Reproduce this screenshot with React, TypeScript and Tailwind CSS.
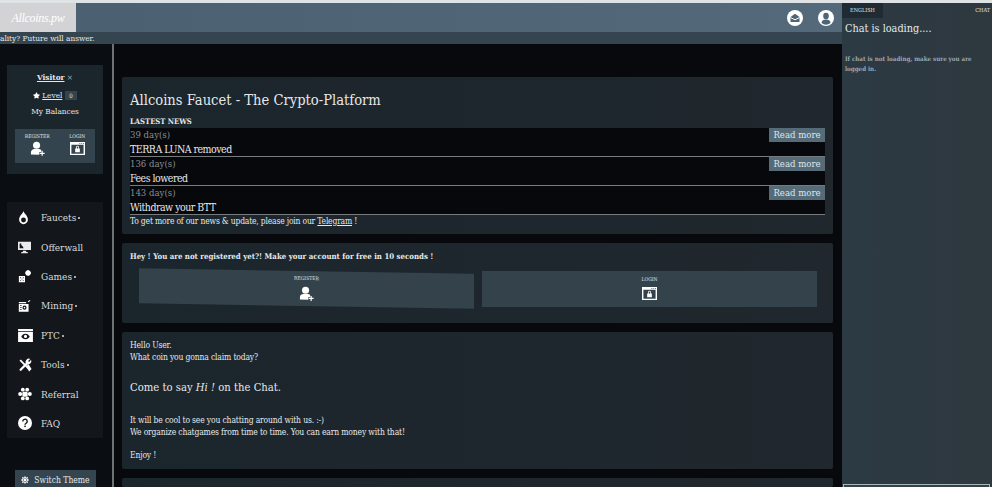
import { FaStar, FaSun } from "react-icons/fa";

const serif = "font-['DejaVu_Serif_Condensed','DejaVu_Serif',serif]";

function DropIcon() {
  return (
    <svg viewBox="0 0 12 16" className="w-[11px] h-[14px]" fill="white">
      <path fillRule="evenodd" d="M6 0c.3 1.500 1 2.200 2 3.500C9.800 5.500 11 7.500 11 10a5 5 0 0 1-10 0c0-2.500 1.200-4.500 3-6.500C5 2.200 5.700 1.500 6 0zm0 7.500a2.800 2.800 0 1 0 0 5.600 2.800 2.800 0 0 0 0-5.600z" />
    </svg>
  );
}

function MonitorIcon() {
  return (
    <svg viewBox="0 0 16 16" className="w-[13px] h-[13px]" fill="#e8eaeb">
      <path fillRule="evenodd" d="M0 1h16v10H0zM2 3v6h5L5.500 6 4 5V3zM6 12h4v1.500h2V15H4v-1.500h2z" />
    </svg>
  );
}

function DiceIcon() {
  return (
    <svg viewBox="0 0 16 16" className="w-[14px] h-[14px]" fill="white">
      <path fillRule="evenodd" d="M1 8h7v7H1zM2.500 9.500v1h1v-1zM5.500 9.500v1h1v-1zM4 11v1h1v-1zM2.500 12.500v1h1v-1zM5.500 12.500v1h1v-1z" />
      <path d="M11.500 1l3.500 3.500-3.500 3.500L8 4.500z" />
      <circle cx="11.500" cy="4.500" r="3" />
    </svg>
  );
}

function MiningIcon() {
  return (
    <svg viewBox="0 0 16 16" className="w-[13px] h-[14px]" fill="white">
      <path fillRule="evenodd" d="M1 3h9v1.500H1zM1 5.500h12V15H1zM8 7.500a2.500 2.500 0 1 0 0 5 2.500 2.500 0 0 0 0-5zM8 9a1 1 0 1 1 0 2 1 1 0 0 1 0-2zM2.500 7v1h2V7zM2.500 9.500v1h2v-1zM2.500 12v1h2v-1zM12 2.500l2.500-2 .8 1-2.500 2z" />
    </svg>
  );
}

function EyeWindow() {
  return (
    <svg viewBox="0 0 16 14" className="w-[15px] h-[13px]" fill="white">
      <path fillRule="evenodd" d="M0 0h16v14H0zM0 2.500v.8h16v-.8zM8 5c-2.500 0-4 1.800-4.500 3C4 9.200 5.500 11 8 11s4-1.800 4.500-3C12 6.800 10.500 5 8 5zm0 1.300a1.700 1.700 0 1 1 0 3.400 1.700 1.700 0 0 1 0-3.400z" />
    </svg>
  );
}

function ToolsIcon() {
  return (
    <svg viewBox="0 0 16 16" className="w-[14px] h-[14px]" fill="white">
      <path d="M3 13.500L11 5.500" stroke="white" strokeWidth="2.600" strokeLinecap="round" />
      <path d="M2.500 2.500L13.500 13.500" stroke="white" strokeWidth="2.200" />
      <path d="M9 6.500a4 4 0 0 1 5-5.500l-2.500 2.300 1.200 1.200L15 2a4 4 0 0 1-5.500 5z" />
      <path d="M9.500 9.500l2.500-2.500 3.500 5.500-2.800 2.800z" />
    </svg>
  );
}

function GroupIcon() {
  return (
    <svg viewBox="0 0 16 16" className="w-[14px] h-[14px]" fill="white">
      <circle cx="5.500" cy="3" r="2.200" />
      <circle cx="10.500" cy="3" r="2.200" />
      <circle cx="2.500" cy="8" r="2.300" />
      <circle cx="13.500" cy="8" r="2.300" />
      <rect x="5" y="5.500" width="6" height="5.500" rx="1.500" />
      <circle cx="5.500" cy="13" r="2.200" />
      <circle cx="10.500" cy="13" r="2.200" />
    </svg>
  );
}

function QuestionIcon() {
  return (
    <svg viewBox="0 0 16 16" className="w-[14px] h-[14px]">
      <circle cx="8" cy="8" r="8" fill="white" />
      <path d="M5.500 6.200a2.500 2.500 0 1 1 3.800 2.100c-.8.500-1.300.9-1.300 1.700" fill="none" stroke="#13171b" strokeWidth="1.600" />
      <rect x="7.200" y="11" width="1.700" height="1.700" fill="#13171b" />
    </svg>
  );
}

function UserPlus({ className }: { className: string }) {
  return (
    <svg viewBox="0 0 16 16" className={className} fill="white">
      <circle cx="7" cy="4.500" r="3.800" />
      <path d="M1 14.500v-2.500c0-2 2-3.400 3.500-3.400h5c1 0 1.800.4 2.400 1v2h-2v3z" />
      <path d="M12.300 10.500h1.300v2h2v1.300h-2v2h-1.300v-2h-2v-1.300h2z" />
    </svg>
  );
}

function WindowLock({ className }: { className: string }) {
  return (
    <svg viewBox="0 0 16 16" className={className} fill="white">
      <path fillRule="evenodd" d="M0 1h16v14H0zM1.500 4v9.500h13V4zM10 2v1h1V2zM12 2v1h1V2zM14 2v1h1V2zM5.500 8h5v4h-5zM6.500 8V6.500a1.500 1.500 0 0 1 3 0V8H8.700V6.500a.7.7 0 0 0-1.400 0V8z" />
    </svg>
  );
}

function MailBadge() {
  return (
    <svg viewBox="0 0 16 16" className="w-[16px] h-[16px]">
      <circle cx="8" cy="8" r="8" fill="white" />
      <path d="M3.500 7L8 3.800 12.500 7v5h-9z" fill="#4f6474" />
      <path d="M3.500 7.500L8 9.800l4.500-2.300" fill="none" stroke="white" strokeWidth="1" />
    </svg>
  );
}

function UserBadge() {
  return (
    <svg viewBox="0 0 16 16" className="w-[16px] h-[16px]">
      <circle cx="8" cy="8" r="8" fill="white" />
      <ellipse cx="8" cy="6" rx="2.800" ry="3.300" fill="#4f6474" />
      <path d="M3.500 13c0-2.500 2-3.600 4.500-3.600s4.500 1.100 4.500 3.600a7 7 0 0 1-9 0z" fill="#4f6474" />
    </svg>
  );
}

const menu = [
  { icon: <DropIcon />, label: "Faucets", more: true },
  { icon: <MonitorIcon />, label: "Offerwall", more: false },
  { icon: <DiceIcon />, label: "Games", more: true },
  { icon: <MiningIcon />, label: "Mining", more: true },
  { icon: <EyeWindow />, label: "PTC", more: true },
  { icon: <ToolsIcon />, label: "Tools", more: true },
  { icon: <GroupIcon />, label: "Referral", more: false },
  { icon: <QuestionIcon />, label: "FAQ", more: false },
];

const news = [
  { age: "39 day(s)", title: "TERRA LUNA removed" },
  { age: "136 day(s)", title: "Fees lowered" },
  { age: "143 day(s)", title: "Withdraw your BTT" },
];

function Card({ className, children }: { className: string; children: React.ReactNode }) {
  return <div className={`bg-gradient-to-r from-[#1b252c] to-[#20282e] rounded-[2px] px-2 ${className}`}>{children}</div>;
}

export default function App() {
  return (
    <div className={`${serif} w-[992px] h-[487px] overflow-hidden flex flex-col bg-[#08090c] text-[#e6e9eb] border-t-[3px] border-[#dfe3e6]`}>
      <div className="flex flex-1 min-h-0">
        <div className="w-[842px] flex flex-col min-h-0">
          {/* Header */}
          <div className="h-[29px] flex items-center bg-gradient-to-r from-[#4a6070] to-[#54697a] shrink-0">
            <div className="w-[76px] h-full bg-[#d3d3d5] flex items-center justify-center">
              <span className="text-white italic font-['Liberation_Serif',serif] text-[12px] tracking-tight">Allcoins.pw</span>
            </div>
            <div className="flex-1" />
            <div className="flex items-center gap-[15px] pr-[8px]">
              <MailBadge />
              <UserBadge />
            </div>
          </div>
          {/* Ticker */}
          <div className="h-[12px] bg-[#34454f] text-[8.200px] leading-[12px] whitespace-nowrap shrink-0">ality? Future will answer.</div>

          <div className="flex flex-1 min-h-0">
            {/* Sidebar */}
            <div className="w-[114px] shrink-0 border-r-2 border-[#6d7275] px-[7px] pt-[21px] flex flex-col bg-[#0a0e12]">
              <div className="w-[96px] h-[109px] shrink-0 bg-[#1b252c] flex flex-col items-center pt-[6px] text-[8.200px] px-[8px]">
                <div><span className="font-bold underline">Visitor</span> <span className="text-[#aaa]">×</span></div>
                <div className="mt-[6px] flex items-center gap-[2px]">
                  <FaStar size={7} color="white" />
                  <span className="underline">Level</span>
                  <span className="bg-[#33444e] px-[4px] text-[6px] ml-[1px]">0</span>
                </div>
                <div className="mt-[3px]">My Balances</div>
                <div className="mt-[12px] w-[80px] h-[34px] bg-[#33444e] flex justify-around pt-[4px] text-[5px]">
                  <div className="flex flex-col items-center gap-[1px]">
                    <span>REGISTER</span>
                    <UserPlus className="w-[15px] h-[15px]" />
                  </div>
                  <div className="flex flex-col items-center gap-[1px]">
                    <span>LOGIN</span>
                    <WindowLock className="w-[15px] h-[15px]" />
                  </div>
                </div>
              </div>

              <div className="w-[96px] mt-[28px] h-[236px] shrink-0 bg-[#13171b] flex flex-col pt-[1px]">
                {menu.map((m) => (
                  <div key={m.label} className="h-[29.400px] flex items-center text-[10px] text-[#d8dadb] shrink-0">
                    <span className="w-[34px] pl-[11px] flex justify-start">{m.icon}</span>
                    <span>{m.label}</span>
                    {m.more && <span className="ml-[2px] mt-[1px] w-[2px] h-[2px] rounded-full bg-[#d8dadb]" />}
                  </div>
                ))}
              </div>

              <div className="mt-[32px] ml-[8px] w-[81px] h-[24px] bg-[#34454f] flex items-center justify-center gap-[5px] text-[8.500px] shrink-0 pb-[4px]">
                <FaSun size={8} color="white" />
                <span>Switch Theme</span>
              </div>
            </div>

            {/* Main */}
            <div className="flex-1 min-w-0 pl-[8px] pr-[9px] pt-[33px] flex flex-col gap-[9px]">
              <Card className="h-[157px] pt-[13px] shrink-0">
                <div className="text-[14.600px] leading-[20px]">Allcoins Faucet - The Crypto-Platform</div>
                <div className="mt-[6px] text-[7.600px] font-bold leading-[12px]">LASTEST NEWS</div>
                <div className="bg-[#06080b]">
                  {news.map((n) => (
                    <div key={n.age} className="h-[29px] border-b border-[#777b7e] relative">
                      <div className="text-[9.500px] leading-[14px] text-[#8b8e90]">{n.age}</div>
                      <div className="text-[10.500px] tracking-[-0.5px] leading-[14px] text-[#e6e9eb]">{n.title}</div>
                      <span className="absolute right-0 top-0 w-[56px] h-[14px] bg-[#566b78] text-center text-[9.500px] leading-[14px] text-[#dfe6ea]">Read more</span>
                    </div>
                  ))}
                </div>
                <div className="text-[8.500px] tracking-[-0.2px] leading-[12px]">
                  To get more of our news &amp; update, please join our <span className="underline">Telegram</span> !
                </div>
              </Card>

              <Card className="h-[80px] pt-[8px] shrink-0">
                <div className="text-[7.800px] font-bold leading-[12px]">Hey ! You are not registered yet?! Make your account for free in 10 seconds !</div>
                <div className="flex mt-[5px] pl-[9px] pr-[8px] gap-[8px]">
                  <div className="w-[335px] h-[35px] mt-[2.500px] bg-[#33424b] skew-y-[0.9deg] flex flex-col items-center pt-[4px] text-[5px] shrink-0">
                    <span>REGISTER</span>
                    <UserPlus className="w-[15px] h-[15px] mt-[3px]" />
                  </div>
                  <div className="flex-1 h-[36px] mt-[3px] bg-[#33424b] flex flex-col items-center pt-[5px] text-[5px]">
                    <span>LOGIN</span>
                    <WindowLock className="w-[15px] h-[15px] mt-[2px]" />
                  </div>
                </div>
              </Card>

              <Card className="h-[137px] pt-[7px] shrink-0 text-[8.500px] tracking-[-0.16px] leading-[12px]">
                <div>Hello User.</div>
                <div>What coin you gonna claim today?</div>
                <div className="mt-[17px] text-[11.200px] tracking-normal leading-[16px]">Come to say <i>Hi !</i> on the Chat.</div>
                <div className="mt-[18px]">It will be cool to see you chatting around with us. :-)</div>
                <div>We organize chatgames from time to time. You can earn money with that!</div>
                <div className="mt-[11px]">Enjoy !</div>
              </Card>

              <Card className="flex-1 min-h-0"><span /></Card>
            </div>
          </div>
        </div>

        {/* Chat */}
        <div className="w-[150px] shrink-0 bg-gradient-to-r from-[#2b3a43] to-[#2f383f] flex flex-col">
          <div className="h-[15px] flex items-center justify-between text-[5.500px] shrink-0">
            <span className="w-[41px] h-full bg-[#1f2a32] flex items-center justify-center">ENGLISH</span>
            <span className="pr-[2px]">CHAT</span>
          </div>
          <div className="pl-[3px] pt-[4px] text-[10.800px] leading-[14px]">Chat is loading....</div>
          <div className="pl-[3px] mt-[18px] text-[6.200px] leading-[10px] font-bold text-[#a0a7ac]">If chat is not loading, make sure you are logged in.</div>
          <div className="flex-1" />
          <div className="h-[3px] ml-[1px] mr-[2px] border-t border-x border-[#a8b4b8] bg-[#33424b] shrink-0" />
        </div>
      </div>
    </div>
  );
}
